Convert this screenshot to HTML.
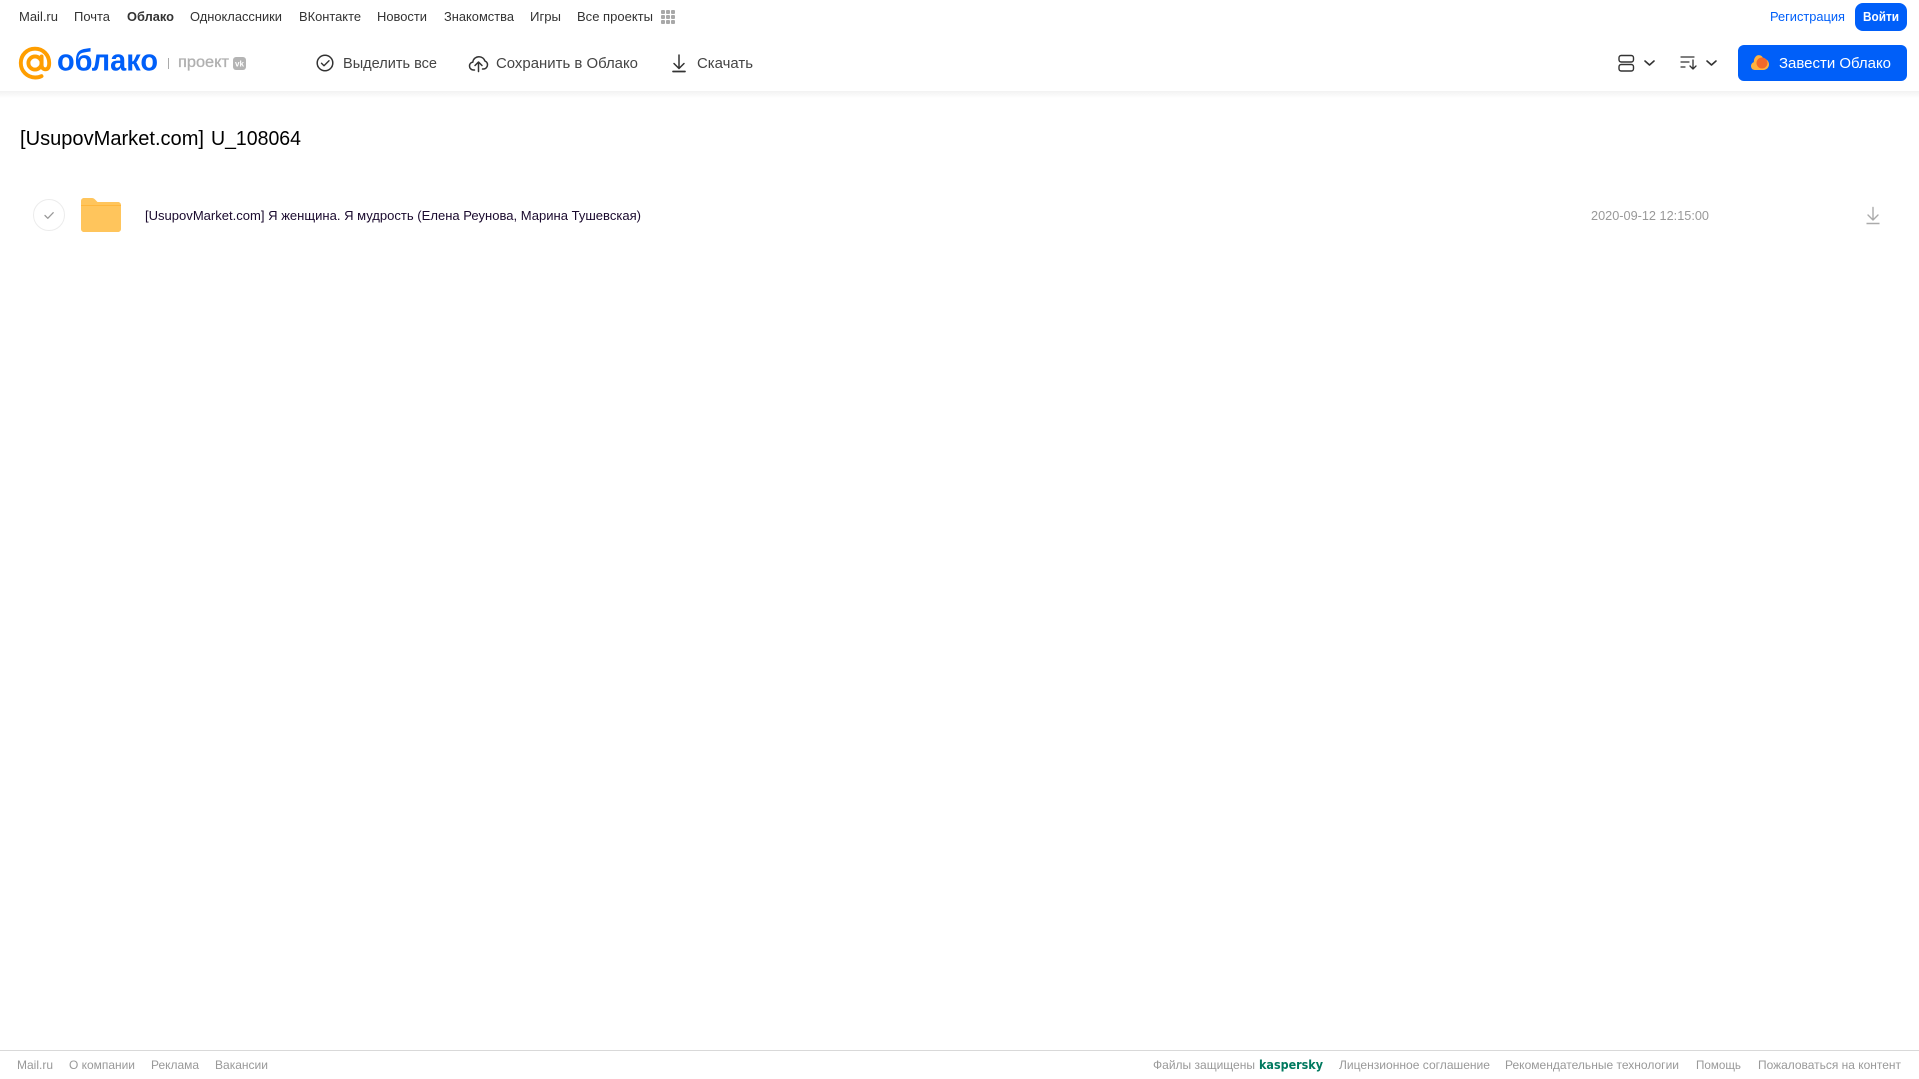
<!DOCTYPE html>
<html lang="ru">
<head>
<meta charset="utf-8">
<title>[UsupovMarket.com] U_108064</title>
<style>
html,body{margin:0;padding:0;background:#fff;width:1919px;height:1079px;overflow:hidden}
svg{display:block;position:absolute;left:0;top:0}
text{font-family:"Liberation Sans",Arial,sans-serif}
.n{font-size:13px;fill:#333}
.t{font-size:15px;fill:#444}
.f{font-size:12px;fill:#999}
</style>
</head>
<body>
<svg width="1919" height="1079" viewBox="0 0 1919 1079" xmlns="http://www.w3.org/2000/svg">
<defs>
<linearGradient id="sh" x1="0" y1="0" x2="0" y2="1"><stop offset="0" stop-color="#f2f2f2"/><stop offset="1" stop-color="#fff"/></linearGradient>
</defs>
<rect width="1919" height="1079" fill="#fff"/>
<rect x="0" y="91" width="1919" height="7" fill="url(#sh)"/>

<!-- top nav -->
<text class="n" x="19" y="21" textLength="39" lengthAdjust="spacingAndGlyphs">Mail.ru</text>
<text class="n" x="74" y="21" textLength="36" lengthAdjust="spacingAndGlyphs">Почта</text>
<text class="n" x="127" y="21" textLength="47" lengthAdjust="spacingAndGlyphs" font-weight="700" style="fill:#333">Облако</text>
<text class="n" x="190" y="21" textLength="92" lengthAdjust="spacingAndGlyphs">Одноклассники</text>
<text class="n" x="299" y="21" textLength="62" lengthAdjust="spacingAndGlyphs">ВКонтакте</text>
<text class="n" x="377" y="21" textLength="50" lengthAdjust="spacingAndGlyphs">Новости</text>
<text class="n" x="444" y="21" textLength="70" lengthAdjust="spacingAndGlyphs">Знакомства</text>
<text class="n" x="530" y="21" textLength="31" lengthAdjust="spacingAndGlyphs">Игры</text>
<text class="n" x="577" y="21" textLength="76" lengthAdjust="spacingAndGlyphs">Все проекты</text>
<g fill="#a8a8a8">
<rect x="661" y="10" width="4" height="4" rx="1"/><rect x="666" y="10" width="4" height="4" rx="1"/><rect x="671" y="10" width="4" height="4" rx="1"/>
<rect x="661" y="15" width="4" height="4" rx="1"/><rect x="666" y="15" width="4" height="4" rx="1"/><rect x="671" y="15" width="4" height="4" rx="1"/>
<rect x="661" y="20" width="4" height="4" rx="1"/><rect x="666" y="20" width="4" height="4" rx="1"/><rect x="671" y="20" width="4" height="4" rx="1"/>
</g>
<text x="1770" y="21" textLength="75" lengthAdjust="spacingAndGlyphs" style="font-size:13px;fill:#005ff9">Регистрация</text>
<rect x="1855" y="3" width="52" height="28" rx="8" fill="#005ff9"/>
<text x="1863" y="21" textLength="36" lengthAdjust="spacingAndGlyphs" font-weight="700" style="font-size:13px;fill:#fff">Войти</text>

<!-- logo -->
<g fill="none" stroke="#ff9e00" stroke-width="3.900" stroke-linecap="round">
<circle cx="35" cy="63" r="6.600"/>
<path d="M41.600 56.500v8.500c0 2.800 1.800 4.300 3.700 4.300 3 0 3.900-3 3.900-6.300 0-8.100-6.200-14.300-14.200-14.300S20.800 54.900 20.800 63s6.400 14.500 14.400 14.500c2.400 0 4.500-.5 6.300-1.400"/>
</g>
<text x="57" y="70.500" textLength="101" lengthAdjust="spacingAndGlyphs" font-weight="700" style="font-size:31px;fill:#005ff9">облако</text>
<rect x="168" y="58" width="1" height="11" fill="#aaa"/>
<text x="178" y="67" textLength="51" lengthAdjust="spacingAndGlyphs" stroke="#b0b0b0" stroke-width="0.300" style="font-size:15.500px;fill:#b0b0b0">проект</text>
<rect x="233" y="57" width="13" height="13" rx="3" fill="#b4b4b4"/>
<text x="235" y="66.500" textLength="9" lengthAdjust="spacingAndGlyphs" font-weight="700" style="font-size:8px;fill:#fff">vk</text>

<!-- toolbar -->
<circle cx="325" cy="63" r="7.800" fill="none" stroke="#333" stroke-width="1.500"/>
<path d="M321.500 63.200l2.500 2.500 5-5" fill="none" stroke="#333" stroke-width="1.400" stroke-linecap="round" stroke-linejoin="round"/>
<text class="t" x="343" y="68" textLength="94" lengthAdjust="spacingAndGlyphs">Выделить все</text>

<path d="M474.500 70h-1c-2.300 0-4-1.800-4-4 0-2 1.400-3.600 3.300-3.900.4-3.100 3-5.400 6.200-5.400 2.800 0 5.200 1.800 6 4.400 1.500.6 2.500 2.100 2.500 3.700 0 2.300-1.700 4.200-4 4.200h-1" fill="none" stroke="#333" stroke-width="1.500" stroke-linecap="round" stroke-linejoin="round"/>
<path d="M478.500 71.500v-9M475 65.500l3.500-3.500 3.500 3.500" fill="none" stroke="#333" stroke-width="1.500" stroke-linecap="round" stroke-linejoin="round"/>
<text class="t" x="496" y="68" textLength="142" lengthAdjust="spacingAndGlyphs">Сохранить в Облако</text>

<path d="M679 55v13M674 63.500l5 5 5-5" fill="none" stroke="#333" stroke-width="1.500" stroke-linecap="round" stroke-linejoin="round"/>
<path d="M673 71.500h12" fill="none" stroke="#333" stroke-width="1.700" stroke-linecap="round"/>
<text class="t" x="697" y="68" textLength="56" lengthAdjust="spacingAndGlyphs">Скачать</text>

<!-- right tools -->
<g fill="none" stroke="#333" stroke-width="1.400">
<rect x="1619" y="55.500" width="14.500" height="6.500" rx="2.200"/>
<rect x="1619" y="64.500" width="14.500" height="6.500" rx="2.200"/>
</g>
<path d="M1645 61l4.500 4 4.500-4" fill="none" stroke="#333" stroke-width="1.600" stroke-linecap="round" stroke-linejoin="round"/>
<path d="M1681 57h13M1681 62h8M1681 67h4" fill="none" stroke="#333" stroke-width="1.200" stroke-linecap="round"/>
<path d="M1693 60v9M1690 66l3 3 3-3" fill="none" stroke="#333" stroke-width="1.300" stroke-linecap="round" stroke-linejoin="round"/>
<path d="M1707 61l4.500 4 4.500-4" fill="none" stroke="#333" stroke-width="1.600" stroke-linecap="round" stroke-linejoin="round"/>

<rect x="1738" y="45" width="169" height="36" rx="6" fill="#005ff9"/>
<path d="M1755 70c-2.500 0-4-1.800-4-4 0-1.900 1.200-3.300 2.800-3.900 0-3.800 2-7 5-7 2.300 0 3.800 1.500 4.500 3.500 3.100 0 5.700 2.500 5.700 5.700 0 3.300-2.500 5.700-5.700 5.700z" fill="#ffb23e"/>
<circle cx="1762" cy="63" r="5.500" fill="#f2692b"/>
<text x="1779" y="68" textLength="112" lengthAdjust="spacingAndGlyphs" style="font-size:15px;fill:#fff">Завести Облако</text>

<!-- title -->
<text x="20" y="145" textLength="184" lengthAdjust="spacingAndGlyphs" style="font-size:20px;fill:#000">[UsupovMarket.com]</text>
<text x="211" y="145" textLength="90" lengthAdjust="spacingAndGlyphs" style="font-size:20px;fill:#000">U_108064</text>

<!-- row -->
<circle cx="49" cy="215" r="15.500" fill="#fff" stroke="#ececec" stroke-width="1"/>
<path d="M45 215.500l2.800 2.800 5.400-5.600" fill="none" stroke="#999" stroke-width="1.300" stroke-linecap="round" stroke-linejoin="round"/>
<path d="M81 201c0-1.700 1.300-3 3-3h8c1.200 0 2 .5 2.800 1.300l2.700 2.700H118c1.700 0 3 1.300 3 3v24c0 1.700-1.300 3-3 3H84c-1.700 0-3-1.300-3-3z" fill="#ffc55c"/>
<rect x="81" y="205" width="40" height="1" fill="#ffb63c"/>
<text x="145" y="220" textLength="496" lengthAdjust="spacingAndGlyphs" style="font-size:13px;fill:#1a0a2e">[UsupovMarket.com] Я женщина. Я мудрость (Елена Реунова, Марина Тушевская)</text>
<text x="1591" y="220" textLength="118" lengthAdjust="spacingAndGlyphs" style="font-size:13px;fill:#999">2020-09-12 12:15:00</text>
<path d="M1873 207.500v12.500M1868 215l5 5 5-5" fill="none" stroke="#aaa" stroke-width="1.400" stroke-linecap="round" stroke-linejoin="round"/>
<path d="M1866.500 223.500h13" fill="none" stroke="#aaa" stroke-width="1.500"/>

<!-- footer -->
<rect x="0" y="1050" width="1919" height="1" fill="#d9d9d9"/>
<text class="f" x="17" y="1069" textLength="36" lengthAdjust="spacingAndGlyphs">Mail.ru</text>
<text class="f" x="69" y="1069" textLength="66" lengthAdjust="spacingAndGlyphs">О компании</text>
<text class="f" x="151" y="1069" textLength="48" lengthAdjust="spacingAndGlyphs">Реклама</text>
<text class="f" x="215" y="1069" textLength="53" lengthAdjust="spacingAndGlyphs">Вакансии</text>
<text class="f" x="1153" y="1069" textLength="102" lengthAdjust="spacingAndGlyphs">Файлы защищены</text>
<text x="1259" y="1069" textLength="64" lengthAdjust="spacingAndGlyphs" font-weight="700" style="font-family:'DejaVu Sans','Liberation Sans',sans-serif;font-size:12px;fill:#00795f">kaspersky</text>
<text class="f" x="1339" y="1069" textLength="151" lengthAdjust="spacingAndGlyphs">Лицензионное соглашение</text>
<text class="f" x="1505" y="1069" textLength="174" lengthAdjust="spacingAndGlyphs">Рекомендательные технологии</text>
<text class="f" x="1696" y="1069" textLength="45" lengthAdjust="spacingAndGlyphs">Помощь</text>
<text class="f" x="1758" y="1069" textLength="143" lengthAdjust="spacingAndGlyphs">Пожаловаться на контент</text>
</svg>
</body>
</html>
